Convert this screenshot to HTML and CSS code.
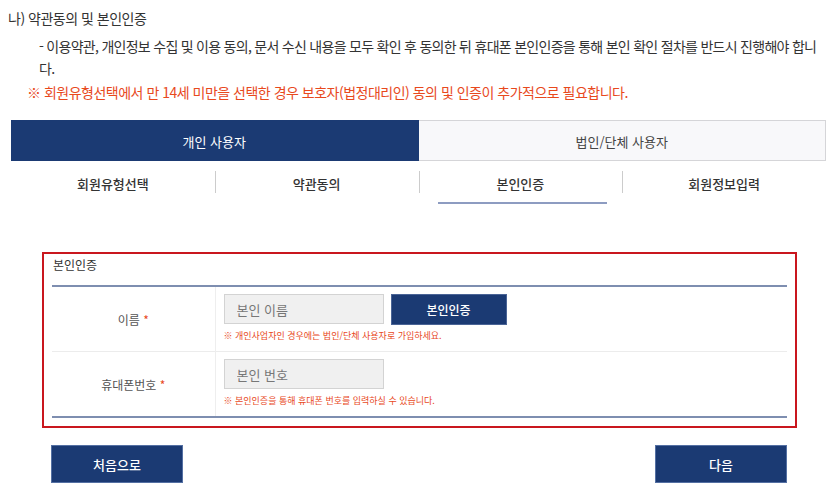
FILE: index.html
```html
<!DOCTYPE html>
<html lang="ko">

<head>
    <meta charset="UTF-8">
    <meta name="viewport" content="width=device-width, initial-scale=1.0">
    <title>회원가입 - 본인인증</title>
    <link rel="stylesheet" href="styles.css">
</head>

<body>
    <div class="intro">
        <h3 class="intro-title">나) 약관동의 및 본인인증</h3>
        <p class="intro-desc">- 이용약관, 개인정보 수집 및 이용 동의, 문서 수신 내용을 모두 확인 후 동의한 뒤 휴대폰 본인인증을 통해 본인 확인 절차를 반드시 진행해야 합니다.</p>
        <p class="intro-warn">※ 회원유형선택에서 만 14세 미만을 선택한 경우 보호자(법정대리인) 동의 및 인증이 추가적으로 필요합니다.</p>
    </div>

    <div class="user-tabs">
        <div class="user-tab active">개인 사용자</div>
        <div class="user-tab">법인/단체 사용자</div>
    </div>

    <ul class="steps">
        <li>회원유형선택</li>
        <li>약관동의</li>
        <li class="current">본인인증</li>
        <li>회원정보입력</li>
    </ul>

    <div class="cert-box">
        <h4 class="cert-title">본인인증</h4>
        <table class="cert-table">
            <tr>
                <th>이름 <span class="req">*</span></th>
                <td>
                    <div class="field">
                        <input type="text" placeholder="본인 이름">
                        <button class="btn-cert">본인인증</button>
                    </div>
                    <p class="note">※ 개인사업자인 경우에는 법인/단체 사용자로 가입하세요.</p>
                </td>
            </tr>
            <tr>
                <th>휴대폰번호 <span class="req">*</span></th>
                <td>
                    <div class="field">
                        <input type="text" placeholder="본인 번호">
                    </div>
                    <p class="note">※ 본인인증을 통해 휴대폰 번호를 입력하실 수 있습니다.</p>
                </td>
            </tr>
        </table>
    </div>

    <div class="bottom-btns">
        <button class="btn-navy">처음으로</button>
        <button class="btn-navy">다음</button>
    </div>
</body>

</html>
```

FILE: styles.css
```css
* {
    padding: 0;
    margin: 0;
    box-sizing: border-box;
}

body {
    font-family: "Noto Sans CJK KR", "Noto Sans", sans-serif;
    color: #333;
    background-color: #fff;
}

/* intro text */
.intro {
    padding: 7px 12px 0 8px;
}

.intro-title {
    font-size: 14px;
    font-weight: 400;
    line-height: 22px;
    letter-spacing: -0.5px;
}

.intro-desc {
    font-size: 14px;
    line-height: 22px;
    letter-spacing: -0.72px;
    padding-left: 31px;
    margin-top: 6px;
}

.intro-warn {
    font-size: 14px;
    line-height: 22px;
    letter-spacing: -0.5px;
    padding-left: 19px;
    color: #e8491d;
    margin-top: 2px;
}

/* user type tabs */
.user-tabs {
    display: flex;
    margin: 17px 8px 0 11px;
}

.user-tab {
    flex: 1;
    height: 41px;
    line-height: 41px;
    text-align: center;
    font-size: 13px;
    color: #444;
    background-color: #f8f8fa;
    border: 1px solid #d5d5d8;
    border-left: none;
}

.user-tab.active {
    background-color: #1b3a73;
    border-color: #1b3a73;
    color: #fff;
}

/* steps */
.steps {
    list-style: none;
    display: flex;
    margin: 0 8px 0 11px;
    height: 44px;
}

.steps li {
    flex: 1;
    position: relative;
    text-align: center;
    font-size: 13px;
    font-weight: 500;
    color: #333;
    line-height: 46px;
}

.steps li + li::before {
    content: "";
    position: absolute;
    left: 0;
    top: 10px;
    height: 22px;
    border-left: 1px solid #ccc;
}

.steps li.current::after {
    content: "";
    position: absolute;
    left: 19px;
    right: 15px;
    bottom: 1px;
    border-bottom: 2px solid #8d9cc1;
}

/* certification box */
.cert-box {
    margin: 47px 37px 0 42px;
    border: 2px solid #c9171e;
    padding: 0 8px 8px 8px;
}

.cert-title {
    font-size: 12px;
    font-weight: 400;
    line-height: 22px;
    padding-left: 1px;
    padding-bottom: 9px;
}

.cert-table {
    width: 100%;
    border-collapse: collapse;
    border-top: 2px solid #7e8eb0;
    border-bottom: 2px solid #7e8eb0;
}

.cert-table tr + tr {
    border-top: 1px solid #ececec;
}

.cert-table th {
    width: 163px;
    font-size: 12px;
    font-weight: 400;
    color: #555;
    border-right: 1px solid #eee;
}

.cert-table .req {
    color: #e8491d;
}

.cert-table td {
    padding: 7px 8px 9px 8px;
}

.field {
    display: flex;
    gap: 7px;
    height: 31px;
}

.field input {
    width: 160px;
    height: 30px;
    padding: 0 12px;
    font-family: inherit;
    font-size: 13px;
    color: #333;
    background-color: #f0f0f0;
    border: 1px solid #d3d3d3;
}

.field input::placeholder {
    color: #777;
}

.btn-cert {
    width: 116px;
    height: 31px;
    font-family: inherit;
    font-size: 12px;
    font-weight: 500;
    color: #fff;
    background-color: #1b3a73;
    border: 1px solid #4a6496;
    cursor: pointer;
}

.note {
    font-size: 9px;
    color: #e8491d;
    line-height: 12px;
    margin-top: 5px;
}

/* bottom buttons */
.bottom-btns {
    display: flex;
    justify-content: space-between;
    margin: 17px 47px 0 51px;
}

.btn-navy {
    width: 132px;
    height: 38px;
    font-family: inherit;
    font-size: 13px;
    font-weight: 500;
    color: #fff;
    background-color: #1b3a73;
    border: 1px solid #5470a3;
    cursor: pointer;
}
```
